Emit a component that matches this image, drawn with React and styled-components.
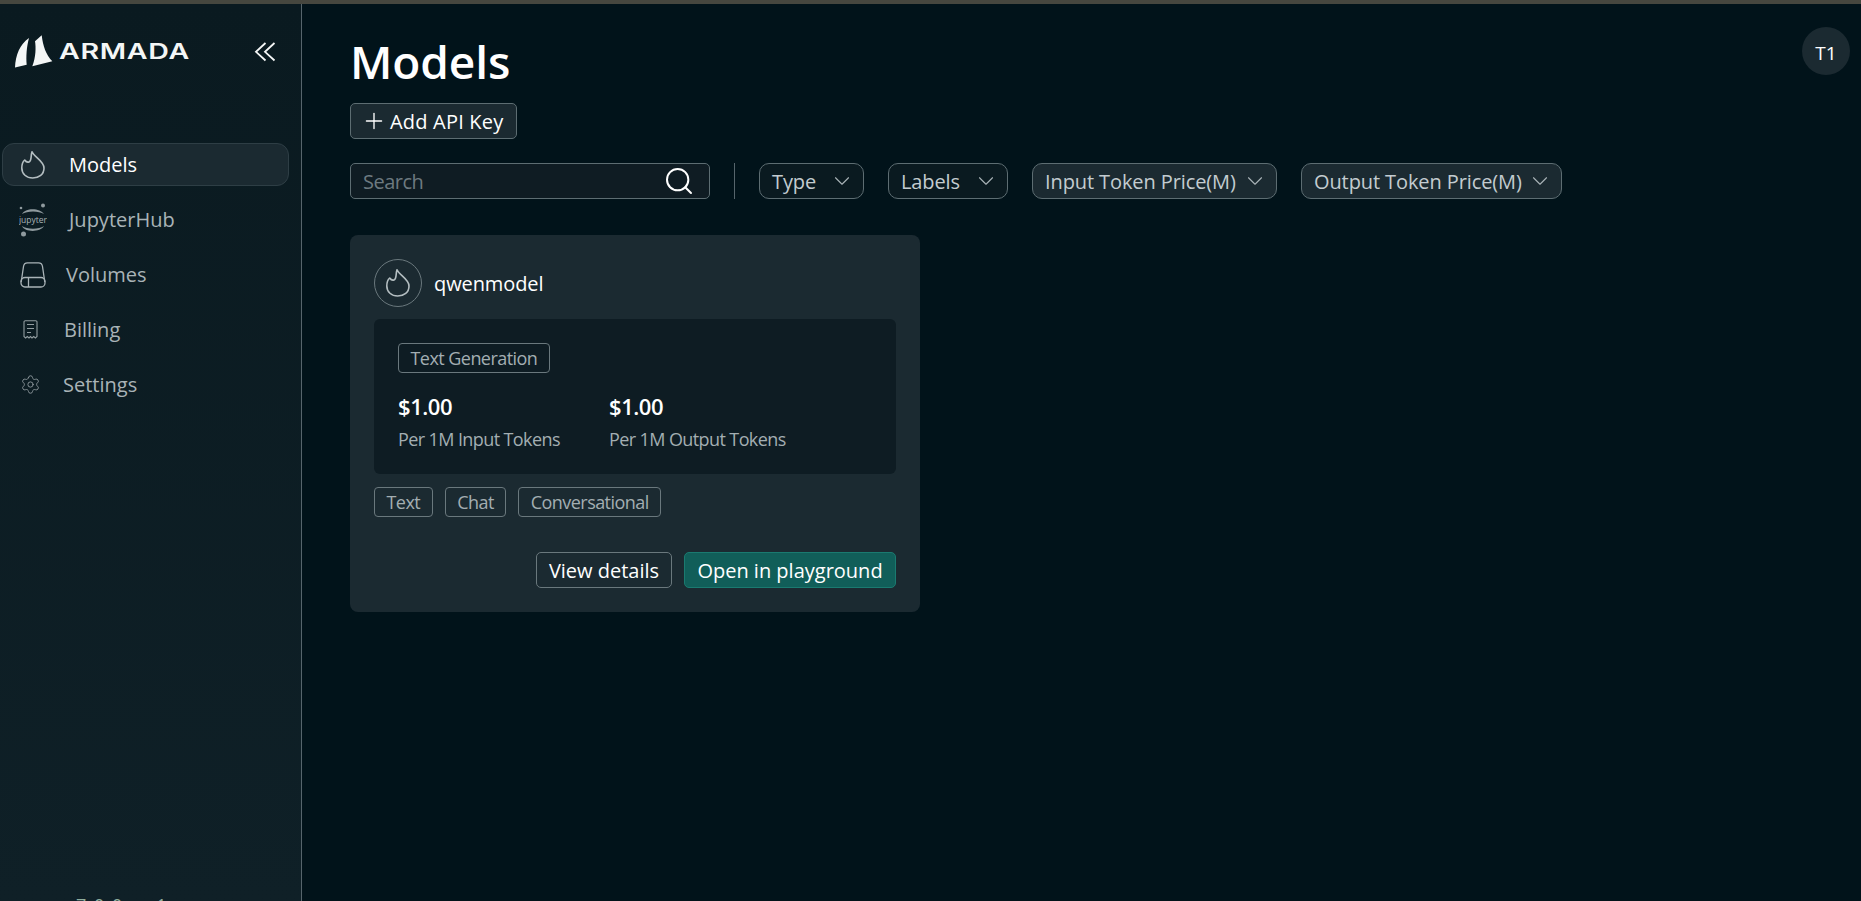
import React from 'react';
import styled, { createGlobalStyle } from 'styled-components';
import { Search, Plus, ChevronDown, Settings } from 'lucide-react';

const GlobalStyle = createGlobalStyle`
  html, body {
    margin: 0;
    height: 100%;
    background: #01131a;
    font-family: "Open Sans", "Noto Sans", sans-serif;
  }
  * { box-sizing: border-box; }
`;

const TopLine = styled.div`
  height: 4px;
  background: #46473f;
`;

const Shell = styled.div`
  display: flex;
  height: 897px;
  overflow: hidden;
`;

const Sidebar = styled.aside`
  width: 302px;
  flex: none;
  display: flex;
  flex-direction: column;
  overflow: hidden;
  background: linear-gradient(180deg, #0a1a20 0%, #0f2027 100%);
  border-right: 1px solid #56656c;
`;

const SideHead = styled.div`
  display: flex;
  align-items: center;
  justify-content: space-between;
  padding: 31px 25px 0 15px;
  height: 64px;
`;

const Logo = styled.div`
  display: flex;
  align-items: center;
  gap: 6px;
`;

const LogoWord = styled.span`
  font-family: "Inter", sans-serif;
  font-weight: 600;
  font-size: 21px;
  letter-spacing: 0.5px;
  color: #f4f6f6;
  display: inline-block;
  transform: scaleX(1.36);
  transform-origin: left center;
`;

const Nav = styled.nav`
  display: flex;
  flex-direction: column;
  gap: 12px;
  margin-top: 75px;
  padding: 0 12px 0 2px;
`;

const NavItem = styled.a`
  display: flex;
  align-items: center;
  height: 43px;
  padding-left: 16px;
  gap: ${(p) => p.$gap || 22}px;
  font-size: 20px;
  letter-spacing: 0;
  border-radius: 12px;
  border: 1px solid ${(p) => (p.$active ? '#2e3e45' : 'transparent')};
  background: ${(p) => (p.$active ? '#1b2a31' : 'transparent')};
  color: ${(p) => (p.$active ? '#ffffff' : '#a9b3b7')};
`;

const NavIcon = styled.span`
  width: ${(p) => p.$w}px;
  display: flex;
  justify-content: center;
  flex: none;
  color: #929da1;
`;

const Version = styled.div`
  margin-top: auto;
  margin-bottom: -17px;
  padding-left: 76px;
  font-size: 18px;
  line-height: 26px;
  letter-spacing: 1.5px;
  color: #8fae9e;
`;

const Main = styled.main`
  flex: 1;
  padding: 23px 11px 0 48px;
`;

const Header = styled.header`
  display: flex;
  justify-content: space-between;
  align-items: flex-start;
`;

const Title = styled.h1`
  margin: 0;
  font-size: 46px;
  line-height: 68px;
  font-weight: 600;
  letter-spacing: -0.1px;
  color: #ffffff;
`;

const Avatar = styled.div`
  width: 48px;
  height: 48px;
  padding-top: 3px;
  border-radius: 50%;
  background: #1b2a31;
  color: #ffffff;
  font-size: 19px;
  display: flex;
  align-items: center;
  justify-content: center;
`;

const AddButton = styled.button`
  display: flex;
  align-items: center;
  gap: 3px;
  height: 36px;
  width: 167px;
  margin-top: 8px;
  padding: 0 0 0 10px;
  border-radius: 5px;
  border: 1px solid #5d6d72;
  background: #1b2a31;
  color: #ffffff;
  font: 400 20px "Open Sans", sans-serif;
  letter-spacing: 0.2px;
`;

const Toolbar = styled.div`
  display: flex;
  align-items: center;
  gap: 24px;
  margin-top: 24px;
`;

const SearchBox = styled.div`
  width: 360px;
  height: 36px;
  display: flex;
  align-items: center;
  justify-content: space-between;
  padding: 0 14px 0 12px;
  border-radius: 5px;
  border: 1px solid #5d6d72;
  background: #0f1c23;
  color: #6d7a80;
  font-size: 20px;
  letter-spacing: -0.5px;
`;

const Divider = styled.div`
  width: 1px;
  height: 36px;
  background: #56656c;
`;

const Filter = styled.button`
  height: 36px;
  width: ${(p) => p.$w}px;
  display: flex;
  align-items: center;
  justify-content: space-between;
  padding: 0 8px 0 12px;
  border-radius: 10px;
  border: 1px solid #5d6d72;
  background: ${(p) => (p.$active ? '#1b2a31' : '#0a1a20')};
  color: #c3ccd0;
  font: 400 20px "Open Sans", sans-serif;
  letter-spacing: -0.1px;
`;

const Card = styled.section`
  width: 570px;
  margin-top: 36px;
  padding: 24px;
  background: #1b2a31;
  border-radius: 8px;
`;

const CardHead = styled.div`
  display: flex;
  align-items: center;
  gap: 12px;
`;

const ModelIcon = styled.div`
  width: 48px;
  height: 48px;
  border-radius: 50%;
  border: 1px solid #6a787d;
  display: flex;
  align-items: center;
  justify-content: center;
`;

const ModelName = styled.div`
  font-size: 20px;
  letter-spacing: -0.1px;
  color: #ffffff;
`;

const Panel = styled.div`
  margin-top: 12px;
  height: 155px;
  padding: 24px;
  background: #0e1c23;
  border-radius: 6px;
`;

const Tag = styled.span`
  display: inline-flex;
  align-items: center;
  height: 30px;
  padding: 0 11.5px;
  border: 1px solid #6a787d;
  border-radius: 4px;
  font-size: 18px;
  letter-spacing: -0.55px;
  color: #a3aeb2;
`;

const Prices = styled.div`
  display: grid;
  grid-template-columns: 211px 1fr;
  margin-top: 17px;
`;

const Price = styled.div`
  font-size: 22px;
  line-height: 32px;
  font-weight: 600;
  letter-spacing: -0.45px;
  color: #ffffff;
`;

const PriceNote = styled.div`
  font-size: 18px;
  line-height: 24px;
  margin-top: 5px;
  letter-spacing: -0.6px;
  color: #a3aeb2;
`;

const TagRow = styled.div`
  display: flex;
  gap: 12px;
  margin-top: 13px;
`;

const Actions = styled.div`
  display: flex;
  justify-content: flex-end;
  gap: 12px;
  margin-top: 35px;
`;

const ActionButton = styled.button`
  height: 36px;
  width: ${(p) => p.$w}px;
  padding: 1px 0 0;
  border-radius: 5px;
  border: 1px solid ${(p) => (p.$primary ? '#1a7a70' : '#6a787d')};
  background: ${(p) => (p.$primary ? '#115e59' : '#1b2a31')};
  color: #ffffff;
  font: 400 20px "Open Sans", sans-serif;
  letter-spacing: 0;
`;

const SailLogo = () => (
  <svg width="38" height="33" viewBox="0 0 38 33">
    <path d="M0 32.5C.5 20 5 9 14 3c-2.500 9-3 19-2.300 26.700Z" fill="#f4f6f6" />
    <path d="M26.700.3C28 11 31 20 37.300 26.300L17.300 31.300C21 22 21 12 20 6.300Z" fill="#f4f6f6" />
  </svg>
);

const CollapseIcon = () => (
  <svg width="22" height="20" viewBox="0 0 22 20" fill="none" stroke="#f4f6f6" strokeWidth="1.8">
    <path d="M11.500 1 2 9.800l9.500 8.700" />
    <path d="M20.500 1 11 9.800l9.500 8.700" />
  </svg>
);

const FlameIcon = ({ size = 24 }) => (
  <svg width={size} height={(size * 28) / 24} viewBox="0 0 24 28" fill="none" stroke="#b4bec1" strokeWidth="1.6" strokeLinejoin="round">
    <path d="M11 .8C13 6 23 10 23 17c0 6.500-5 10-11.300 10C5.500 27 .8 23 .8 17c0-4 1.200-6.500 2.900-8 1.300 2 2.800 2.500 4.300 2 3-1.500 1.500-6 3-10.200Z" />
  </svg>
);

const JupyterIcon = () => (
  <svg width="28" height="34" viewBox="0 0 28 34" fill="#8f9a9e">
    <circle cx="24" cy="2.500" r="2" />
    <circle cx="2" cy="5" r="1.300" />
    <circle cx="4.500" cy="31" r="2.500" />
    <path d="M3 11C6 4.500 21 4.500 25 11 20 7.500 8 7.500 3 11Z" />
    <path d="M3 23C6 29.500 21 29.500 25 23 20 26.500 8 26.500 3 23Z" />
    <text x="14" y="19.500" textAnchor="middle" fontSize="8.500" fontFamily="Open Sans, sans-serif" fill="#a9b3b7">jupyter</text>
  </svg>
);

const VolumeIcon = () => (
  <svg width="26" height="26" viewBox="0 0 26 26" fill="none" stroke="#a9b3b7" strokeWidth="1.300">
    <path d="M1.200 20 3.500 4.500C3.800 2.200 5.500.8 7.500.8h11c2 0 3.700 1.400 4 3.700L24.800 20" />
    <rect x="1" y="15.500" width="24" height="9.500" rx="4" />
    <path d="M8.500 15.500V25" />
  </svg>
);

const ReceiptIcon = () => (
  <svg width="15" height="19" viewBox="0 0 15 19" fill="none" stroke="#929da1" strokeWidth="1.100">
    <path d="M1 16.500V2a1.300 1.300 0 0 1 1.300-1.300h10.400A1.300 1.300 0 0 1 14 2v14.500l-1.600 1.500-1.700-1.500L9 18l-1.500-1.500L6 18l-1.700-1.500L2.600 18Z" />
    <path d="M4 4.500h7M4 8.500h7M4 12.500h4" />
  </svg>
);

const links = [
  { label: 'Models', icon: <FlameIcon />, w: 28, active: true },
  { label: 'JupyterHub', icon: <JupyterIcon />, w: 28 },
  { label: 'Volumes', icon: <VolumeIcon />, w: 28, gap: 19 },
  { label: 'Billing', icon: <ReceiptIcon />, w: 23 },
  { label: 'Settings', icon: <Settings size={21} strokeWidth={1} />, w: 22 },
];

const filters = [
  { label: 'Type', w: 105 },
  { label: 'Labels', w: 120 },
  { label: 'Input Token Price(M)', w: 245, active: true },
  { label: 'Output Token Price(M)', w: 261, active: true },
];

export default function App() {
  return (
    <>
      <GlobalStyle />
      <TopLine />
      <Shell>
        <Sidebar>
          <SideHead>
            <Logo>
              <SailLogo />
              <LogoWord>ARMADA</LogoWord>
            </Logo>
            <CollapseIcon />
          </SideHead>
          <Nav>
            {links.map((l) => (
              <NavItem key={l.label} $active={l.active} $gap={l.gap}>
                <NavIcon $w={l.w}>{l.icon}</NavIcon>
                {l.label}
              </NavItem>
            ))}
          </Nav>
          <Version>7.0.0-rc.1</Version>
        </Sidebar>
        <Main>
          <Header>
            <Title>Models</Title>
            <Avatar>T1</Avatar>
          </Header>
          <AddButton>
            <Plus size={26} strokeWidth={1.25} />
            Add API Key
          </AddButton>
          <Toolbar>
            <SearchBox>
              Search
              <Search size={32} strokeWidth={1.5} color="#ffffff" />
            </SearchBox>
            <Divider />
            {filters.map((f) => (
              <Filter key={f.label} $w={f.w} $active={f.active}>
                {f.label}
                <ChevronDown size={26} strokeWidth={1} color="#a9b3b7" />
              </Filter>
            ))}
          </Toolbar>
          <Card>
            <CardHead>
              <ModelIcon>
                <FlameIcon size={24} />
              </ModelIcon>
              <ModelName>qwenmodel</ModelName>
            </CardHead>
            <Panel>
              <Tag>Text Generation</Tag>
              <Prices>
                <div>
                  <Price>$1.00</Price>
                  <PriceNote>Per 1M Input Tokens</PriceNote>
                </div>
                <div>
                  <Price>$1.00</Price>
                  <PriceNote>Per 1M Output Tokens</PriceNote>
                </div>
              </Prices>
            </Panel>
            <TagRow>
              <Tag>Text</Tag>
              <Tag>Chat</Tag>
              <Tag>Conversational</Tag>
            </TagRow>
            <Actions>
              <ActionButton $w={136}>View details</ActionButton>
              <ActionButton $w={212} $primary>Open in playground</ActionButton>
            </Actions>
          </Card>
        </Main>
      </Shell>
    </>
  );
}
